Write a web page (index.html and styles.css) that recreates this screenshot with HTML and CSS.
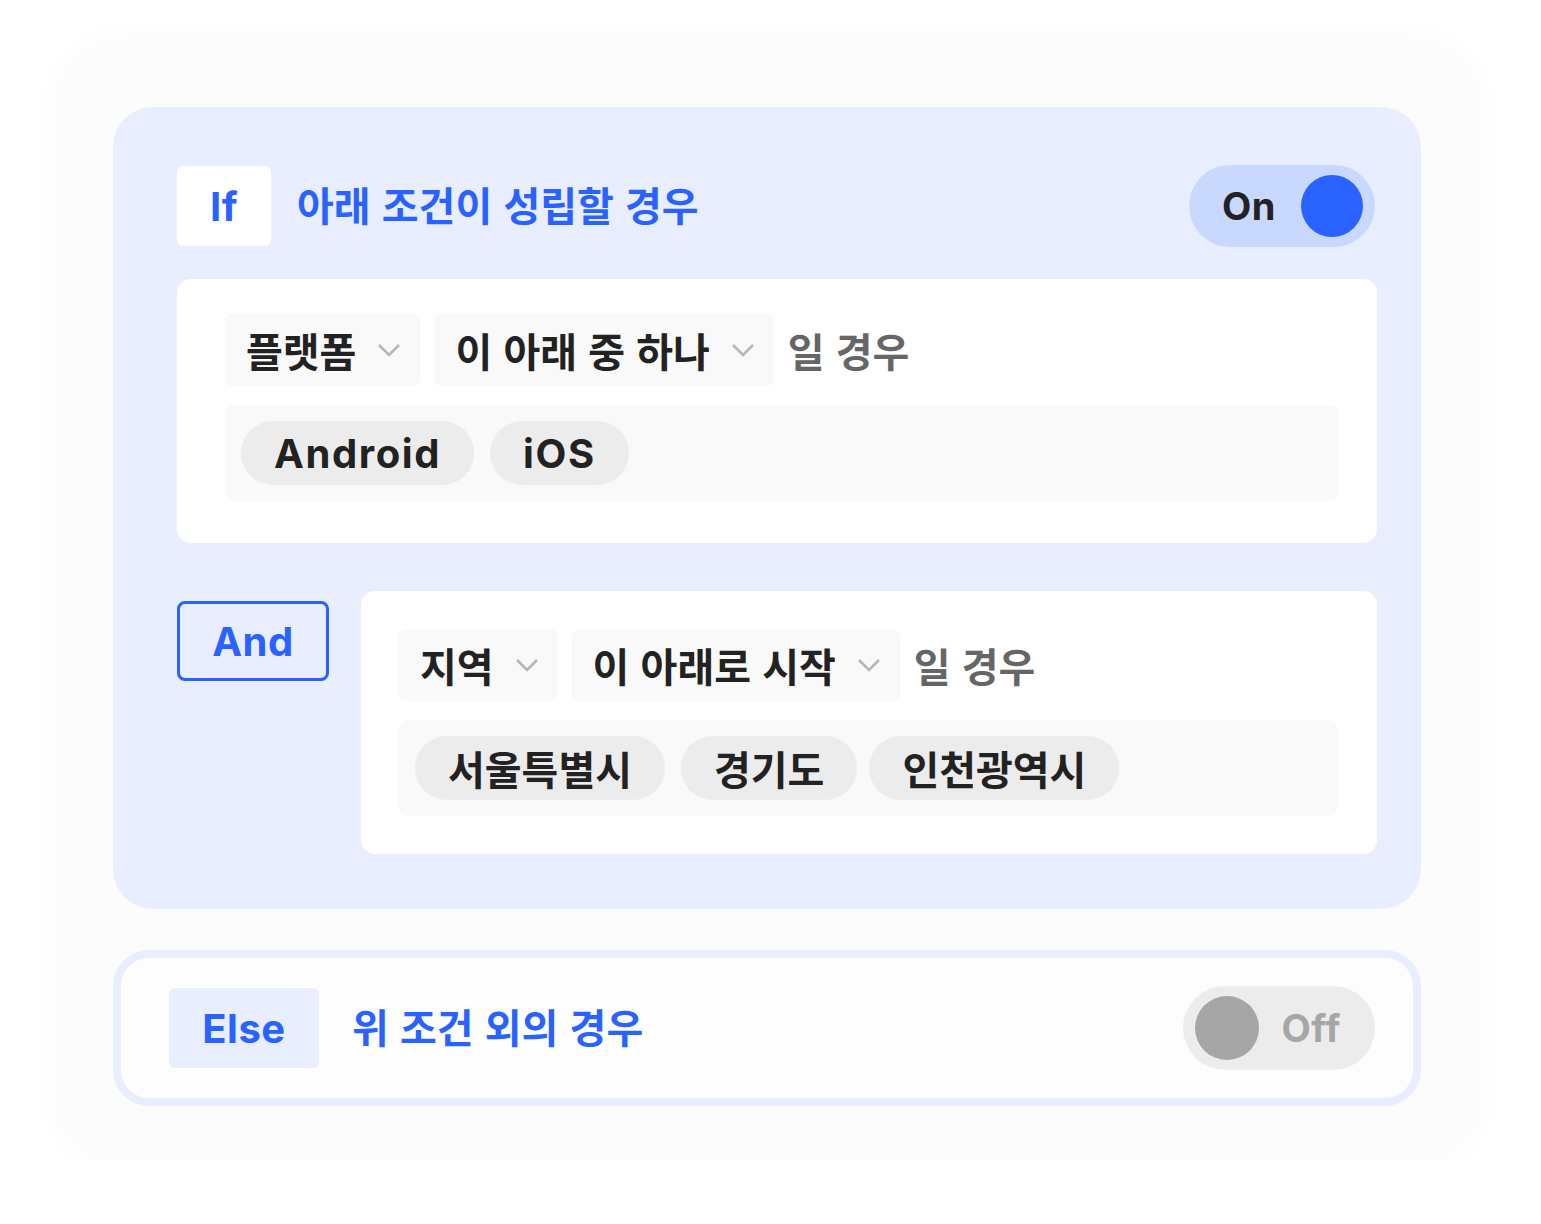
FILE: index.html
```html
<!DOCTYPE html>
<html lang="ko">
<head>
  <meta charset="UTF-8">
  <meta name="viewport" content="width=device-width,initial-scale=1">
  <title>조건 설정</title>
  <link rel="stylesheet" href="styles.css">
</head>
<body>
  <div class="card">
    <!-- If block -->
    <section class="if-panel">
      <div class="panel-head">
        <div class="tag tag-if">If</div>
        <div class="head-title">아래 조건이 성립할 경우</div>
        <div class="toggle on">
          <span class="toggle-label">On</span>
          <span class="knob"></span>
        </div>
      </div>

      <div class="rule">
        <div class="rule-line">
          <div class="select">플랫폼
            <svg class="chev" viewBox="0 0 24 14"><path d="M2 2l10 10L22 2"/></svg>
          </div>
          <div class="select">이 아래 중 하나
            <svg class="chev" viewBox="0 0 24 14"><path d="M2 2l10 10L22 2"/></svg>
          </div>
          <span class="rule-tail">일 경우</span>
        </div>
        <div class="chips">
          <span class="chip chip-en">Android</span>
          <span class="chip chip-en">iOS</span>
        </div>
      </div>

      <div class="and-row">
        <div class="tag tag-and">And</div>
        <div class="rule rule-and">
          <div class="rule-line">
            <div class="select">지역
              <svg class="chev" viewBox="0 0 24 14"><path d="M2 2l10 10L22 2"/></svg>
            </div>
            <div class="select">이 아래로 시작
              <svg class="chev" viewBox="0 0 24 14"><path d="M2 2l10 10L22 2"/></svg>
            </div>
            <span class="rule-tail">일 경우</span>
          </div>
          <div class="chips">
            <span class="chip">서울특별시</span>
            <span class="chip">경기도</span>
            <span class="chip chip-tight">인천광역시</span>
          </div>
        </div>
      </div>
    </section>

    <!-- Else block -->
    <section class="else-panel">
      <div class="tag tag-else">Else</div>
      <div class="head-title">위 조건 외의 경우</div>
      <div class="toggle off">
        <span class="knob"></span>
        <span class="toggle-label">Off</span>
      </div>
    </section>
  </div>
</body>
</html>
```

FILE: styles.css
```css
body {
  margin: 0;
  background: #fff;
  font-family: 'Inter', 'Noto Sans CJK KR', sans-serif;
  color: #222;
}
.card {
  margin: 45px 0 0 62px;
  width: 1412px;
  height: 1115px;
  box-sizing: border-box;
  padding: 62px 53px 0 51px;
  background: #fcfcfc;
  border-radius: 60px;
  box-shadow: 0 0 36px rgba(0, 0, 0, 0.035);
}

/* shared */
.tag {
  display: flex;
  align-items: center;
  justify-content: center;
  box-sizing: border-box;
  height: 80px;
  border-radius: 6px;
  font-weight: 700;
  font-size: 40px;
  letter-spacing: 0.5px;
  color: #2962ff;
}
.head-title {
  flex: 1;
  font-weight: 700;
  font-size: 40px;
  line-height: 1.3;
  padding-bottom: 4px;
  color: #2962ff;
  font-family: 'Noto Sans CJK KR', sans-serif;
}
.toggle {
  display: flex;
  align-items: center;
  border-radius: 42px;
  font-weight: 700;
  font-size: 38px;
  letter-spacing: 0.5px;
}
.knob {
  border-radius: 50%;
}

/* if panel */
.if-panel {
  background: #e8eefe;
  border-radius: 40px;
  padding: 58px 46px 55px 64px;
}
.panel-head {
  display: flex;
  align-items: center;
  height: 82px;
  margin-bottom: 32px;
}
.tag-if {
  width: 94px;
  background: #fff;
  margin-right: 26px;
}
.toggle.on {
  width: 186px;
  height: 82px;
  background: #c9d8fd;
  padding: 0 12px 0 33px;
  box-sizing: border-box;
  justify-content: space-between;
  color: #222;
}
.toggle.on .knob {
  width: 62px;
  height: 62px;
  background: #2962ff;
}

.rule {
  background: #fff;
  border-radius: 14px;
  padding: 35px 40px 42px 48px;
}
.if-panel > .rule {
  margin-right: -2px;
}
.rule-line {
  display: flex;
  align-items: center;
  gap: 14px;
  margin-bottom: 19px;
}
.select {
  display: flex;
  align-items: center;
  gap: 21px;
  height: 72px;
  padding: 0 19px 0 21px;
  background: #f9f9f9;
  border-radius: 7px;
  font-family: 'Noto Sans CJK KR', sans-serif;
  font-weight: 700;
  font-size: 40px;
  color: #222;
}
.chev {
  width: 24px;
  height: 14px;
  fill: none;
  stroke: #b5b5b5;
  stroke-width: 2.6;
}
.rule-tail {
  font-family: 'Noto Sans CJK KR', sans-serif;
  font-weight: 700;
  font-size: 40px;
  color: #666;
}
.chips {
  display: flex;
  gap: 16px;
  height: 96px;
  box-sizing: border-box;
  padding: 16px;
  background: #f9f9f9;
  border-radius: 7px;
}
.chip {
  display: flex;
  align-items: center;
  height: 64px;
  padding: 0 33px;
  background: #ececec;
  border-radius: 32px;
  font-weight: 700;
  font-size: 40px;
  color: #222;
}
.chip-en {
  letter-spacing: 1.6px;
}
.chip-tight {
  margin-left: -4px;
}

.and-row {
  display: flex;
  align-items: flex-start;
  gap: 32px;
  margin-top: 48px;
  margin-right: -2px;
}
.tag-and {
  width: 152px;
  margin-top: 10px;
  border: 3px solid #2962ff;
  border-radius: 8px;
}
.rule-and {
  flex: 1;
  padding: 38px 40px 38px 38px;
}

/* else panel */
.else-panel {
  display: flex;
  align-items: center;
  margin-top: 41px;
  height: 156px;
  box-sizing: border-box;
  border: 8px solid #e8eefe;
  border-radius: 36px;
  background: #fdfdfd;
  padding: 0 38px 0 48px;
}
.tag-else {
  width: 150px;
  background: #e8eefe;
  margin-right: 33px;
}
.toggle.off {
  width: 192px;
  height: 84px;
  background: #ececec;
  padding: 0 34px 0 12px;
  box-sizing: border-box;
  justify-content: space-between;
  color: #a6a6a6;
}
.toggle.off .knob {
  width: 64px;
  height: 64px;
  background: #a6a6a6;
}
```
